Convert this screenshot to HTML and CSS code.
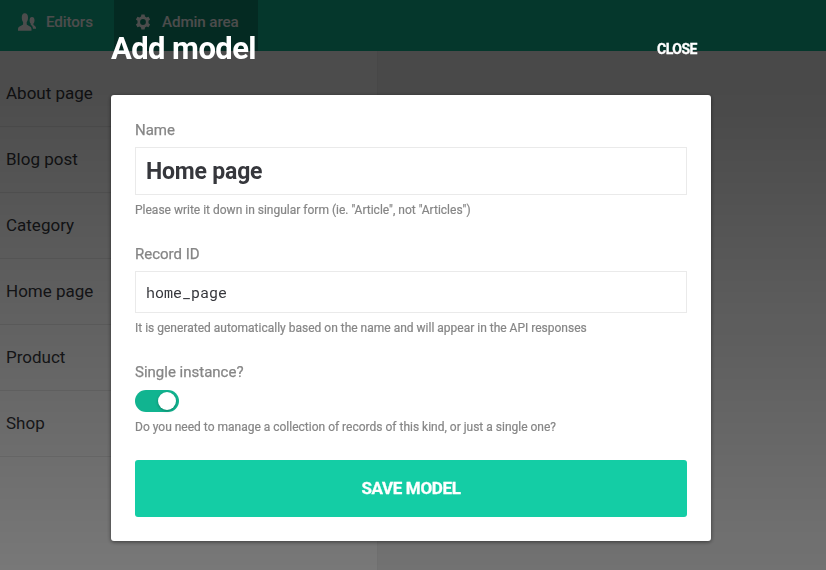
FILE: index.html
```html
<!DOCTYPE html>
<html lang="en">
<head>
<meta charset="utf-8">
<title>Add model</title>
<link rel="stylesheet" href="styles.css">
</head>
<body>
<div class="app">
  <nav class="topbar">
    <a class="tab">
      <svg class="tab-icon users" viewBox="0 0 18 18" width="18" height="18"><path d="M6.800.2C4.600.2 3.800 2 3.800 4.500c0 2.200.5 3.500 1.300 4.500v2.300C5.100 12.500 0 13 0 16v1.800h13.500V16c0-3-4.800-3.500-4.800-4.700V9c.8-1 1.300-2.300 1.300-4.500C10 2 9 .2 6.800.2zM14 3.900c-1.500 0-2.400 1.200-2.400 3.300 0 1.500.4 2.600 1.100 3.300v1.300c1.300.9 2.200 2 2.300 4H18v-1c0-1.800-2.600-2.300-2.600-3.300v-1c.7-.7 1.100-1.800 1.100-3.300 0-2.100-.9-3.300-2.500-3.300z"/></svg>
      <span>Editors</span>
    </a>
    <a class="tab active">
      <svg class="tab-icon gear" viewBox="0 0 16 16" width="16" height="16"><path fill-rule="evenodd" d="M6.400.5h3.200l.4 2 1.500.9 2-.7 1.600 2.700-1.600 1.400v2.400l1.600 1.400-1.600 2.700-2-.7-1.500.9-.4 2H6.400l-.4-2-1.500-.9-2 .7L.9 10.600l1.600-1.400V6.800L.9 5.400l1.600-2.700 2 .7L6 2.500zM8 5.100a2.900 2.900 0 1 0 0 5.800 2.900 2.900 0 0 0 0-5.800z"/></svg>
      <span>Admin area</span>
    </a>
  </nav>
  <div class="content">
    <ul class="models">
      <li>About page</li>
      <li>Blog post</li>
      <li>Category</li>
      <li>Home page</li>
      <li>Product</li>
      <li>Shop</li>
    </ul>
  </div>
</div>
<div class="overlay">
  <div class="dialog">
    <header class="dialog-head">
      <h1>Add model</h1>
      <a class="close">CLOSE</a>
    </header>
    <form class="card">
      <div class="field name">
        <label for="name">Name</label>
        <input id="name" type="text" value="Home page">
        <p class="hint">Please write it down in singular form (ie. "Article", not "Articles")</p>
      </div>
      <div class="field record">
        <label for="record">Record ID</label>
        <input id="record" type="text" value="home_page" spellcheck="false">
        <p class="hint">It is generated automatically based on the name and will appear in the API responses</p>
      </div>
      <div class="field single">
        <label>Single instance?</label>
        <span class="switch"><span class="knob"></span></span>
        <p class="hint">Do you need to manage a collection of records of this kind, or just a single one?</p>
      </div>
      <button class="save" type="button">SAVE MODEL</button>
    </form>
  </div>
</div>
</body>
</html>
```
FILE: styles.css
```css
* { box-sizing: border-box; }

body {
  margin: 0;
  height: 570px;
  overflow: hidden;
  font-family: Roboto, sans-serif;
}

h1, p, ul { margin: 0; padding: 0; }

.app {
  height: 570px;
  display: flex;
  flex-direction: column;
}

.topbar {
  display: flex;
  height: 51px;
  background: #11b894;
}

.tab {
  display: flex;
  width: 114px;
  height: 51px;
  padding: 0 0 7px 18px;
  align-items: center;
  font-size: 15.200px;
  font-weight: 500;
  letter-spacing: -.1px;
  white-space: nowrap;
  color: #fff;
}

.tab-icon { flex: none; fill: #fff; }
.users { margin-right: 10px; }
.gear { margin-right: 11px; }

.tab.active {
  width: 144px;
  padding-left: 21px;
  background: #0e8e72;
}

.content {
  flex: 1;
  display: flex;
  background: #f3f3f3;
}

.models {
  width: 378px;
  list-style: none;
  background: #fff;
  border-right: 1px solid #eee;
}

.models li {
  height: 66px;
  padding-left: 6px;
  border-bottom: 1px solid #eaeaea;
  font-size: 17px;
  line-height: 65px;
  color: #36373c;
}

.models li:first-child {
  height: 76px;
  padding-top: 10px;
}

.overlay {
  position: fixed;
  inset: 0;
  background: linear-gradient(rgba(0, 0, 0, .7) 90px, rgba(0, 0, 0, .53) 570px);
}

.dialog {
  width: 600px;
  margin-left: 111px;
  padding-top: 29px;
}

.dialog-head {
  display: flex;
  height: 66px;
  justify-content: space-between;
  padding-right: 14px;
  color: #fff;
}

.dialog-head h1 {
  font-size: 31px;
  line-height: 40px;
  font-weight: 700;
  letter-spacing: -.58px;
}

.close {
  font-size: 14px;
  font-weight: 700;
  line-height: 41px;
  letter-spacing: -.5px;
  -webkit-text-stroke: .3px #fff;
}

.card {
  height: 446px;
  padding: 24px;
  background: #fff;
  border-radius: 3px;
  box-shadow: 0 1px 4px rgba(0, 0, 0, .5);
}

.field { color: #868686; }
.name { height: 124px; }
.record { height: 118px; }
.single { height: 99px; }

.field label {
  display: block;
  height: 28px;
  font-size: 15px;
  line-height: 22px;
  -webkit-text-stroke: .25px #868686;
}

.field input {
  display: block;
  width: 100%;
  height: 48px;
  padding: 0 10px;
  border: 1px solid #eaeaea;
  border-radius: 0;
  outline: 0;
  font: 700 23px Roboto, sans-serif;
  letter-spacing: -.2px;
  color: #36373c;
}

.record input {
  height: 42px;
  font: 15px "Roboto Mono", "DejaVu Sans Mono", monospace;
  letter-spacing: 0;
}

.hint {
  padding-top: 6px;
  font-size: 12px;
  line-height: 18px;
  -webkit-text-stroke: .2px #868686;
}

.switch {
  display: flex;
  justify-content: flex-end;
  width: 44px;
  height: 22px;
  margin-top: 1px;
  padding: 2px 3px 2px 2px;
  border-radius: 11px;
  background: #11b490;
}

.knob {
  width: 18px;
  height: 18px;
  border-radius: 50%;
  background: #fff;
  box-shadow: 0 1px 3px rgba(0, 0, 0, .3);
}

.save {
  display: block;
  width: 100%;
  height: 57px;
  padding: 0 0 1px;
  border: 0;
  border-radius: 3px;
  background: #14cda5;
  font: 700 17px Roboto, sans-serif;
  letter-spacing: -.35px;
  -webkit-text-stroke: .3px #fff;
  color: #fff;
}
```
